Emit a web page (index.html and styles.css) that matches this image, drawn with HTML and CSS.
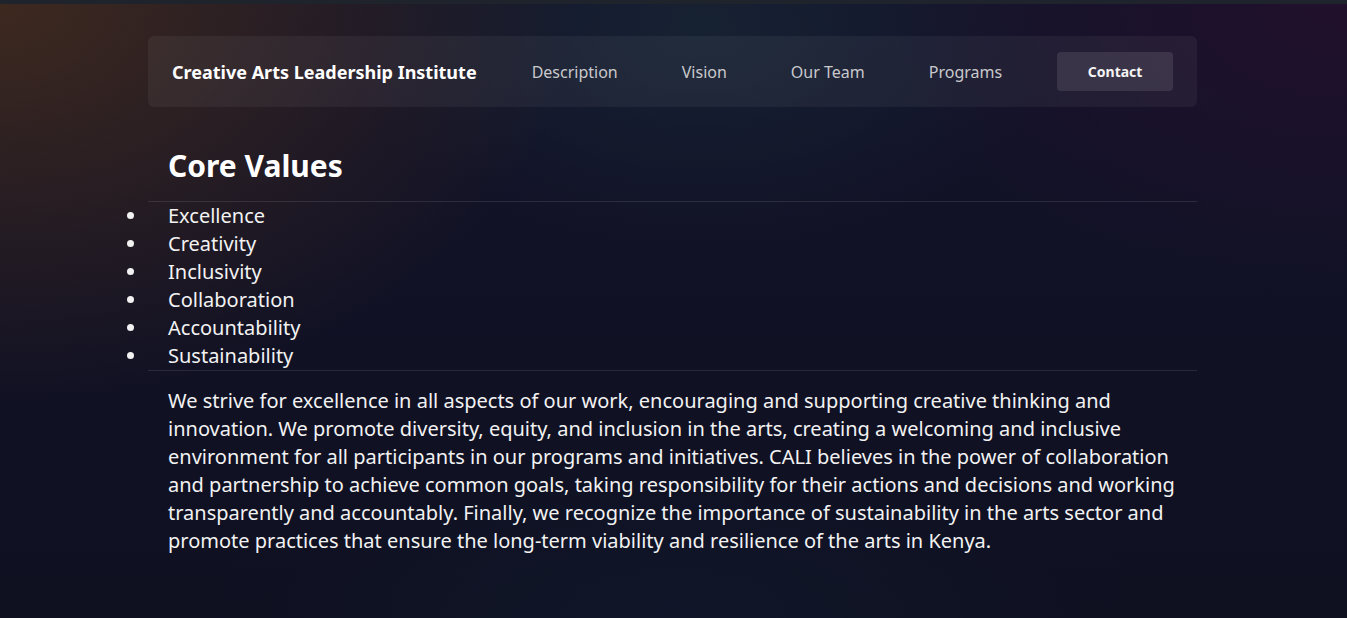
FILE: index.html
```html
<!DOCTYPE html>
<html lang="en">
<head>
<meta charset="utf-8">
<title>Creative Arts Leadership Institute - Core Values</title>
<link rel="stylesheet" href="styles.css">
</head>
<body>
<div class="topstrip"></div>
<div class="page">
  <nav class="navbar">
    <div class="brand">Creative Arts Leadership Institute</div>
    <ul class="links">
      <li><a href="#">Description</a></li>
      <li><a href="#">Vision</a></li>
      <li><a href="#">Our Team</a></li>
      <li><a href="#">Programs</a></li>
    </ul>
    <a class="contact" href="#">Contact</a>
  </nav>
  <section class="values">
    <h2>Core Values</h2>
    <ul class="value-list">
      <li>Excellence</li>
      <li>Creativity</li>
      <li>Inclusivity</li>
      <li>Collaboration</li>
      <li>Accountability</li>
      <li>Sustainability</li>
    </ul>
    <p>We strive for excellence in all aspects of our work, encouraging and supporting creative thinking and innovation. We promote diversity, equity, and inclusion in the arts, creating a welcoming and inclusive environment for all participants in our programs and initiatives. CALI believes in the power of collaboration and partnership to achieve common goals, taking responsibility for their actions and decisions and working transparently and accountably. Finally, we recognize the importance of sustainability in the arts sector and promote practices that ensure the long-term viability and resilience of the arts in Kenya.</p>
  </section>
</div>
</body>
</html>
```

FILE: styles.css
```css
* { box-sizing: border-box; }
html, body {
  margin: 0;
  padding: 0;
  height: 100%;
}
body {
  font-family: "Noto Sans", "Open Sans", sans-serif;
  color: #f2f2f2;
  background-color: #10111f;
  background-image:
    radial-gradient(ellipse 800px 560px at 0% 0%, rgba(64, 42, 30, 0.95), rgba(64, 42, 30, 0) 72%),
    radial-gradient(ellipse 620px 380px at 100% 0%, rgba(34, 16, 44, 0.95), rgba(34, 16, 44, 0) 75%),
    radial-gradient(ellipse 520px 320px at 52% 4%, rgba(24, 40, 54, 0.7), rgba(24, 40, 54, 0) 70%),
    radial-gradient(ellipse 700px 260px at 50% 100%, rgba(16, 26, 46, 0.6), rgba(16, 26, 46, 0) 70%),
    linear-gradient(180deg, #13132a 0%, #0f1020 100%);
  overflow: hidden;
}
.topstrip {
  height: 4px;
  background: #1f232b;
}
.page {
  width: 1049px;
  margin: 32px 0 0 148px;
}
.navbar {
  display: flex;
  align-items: center;
  gap: 23px;
  padding: 16px 24px;
  background: rgba(255, 255, 255, 0.05);
  border-radius: 6px;
}
.brand {
  font-weight: 700;
  font-size: 18px;
  color: #ffffff;
  white-space: nowrap;
}
.links {
  display: flex;
  list-style: none;
  margin: 0;
  padding: 0;
}
.links a {
  display: block;
  padding: 0 32px;
  font-size: 16px;
  color: #c9c9cc;
  text-decoration: none;
  white-space: nowrap;
}
.contact {
  display: flex;
  align-items: center;
  justify-content: center;
  flex: none;
  width: 116px;
  height: 39px;
  margin-left: auto;
  border-radius: 4px;
  background: rgba(255, 255, 255, 0.1);
  color: #f4f4f4;
  font-weight: 700;
  font-size: 14px;
  text-decoration: none;
}
.values h2 {
  margin: 38px 0 0;
  padding: 0 20px 14px;
  font-size: 30px;
  line-height: 42px;
  font-weight: 700;
  color: #ffffff;
  border-bottom: 1px solid rgba(255, 255, 255, 0.1);
}
.value-list {
  margin: 0;
  padding: 0;
  font-size: 20px;
  line-height: 28px;
  border-bottom: 1px solid rgba(255, 255, 255, 0.1);
}
.value-list li {
  padding-left: 20px;
}
.values p {
  margin: 16px 0 0;
  padding: 0 20px;
  font-size: 20px;
  line-height: 28px;
}
```
